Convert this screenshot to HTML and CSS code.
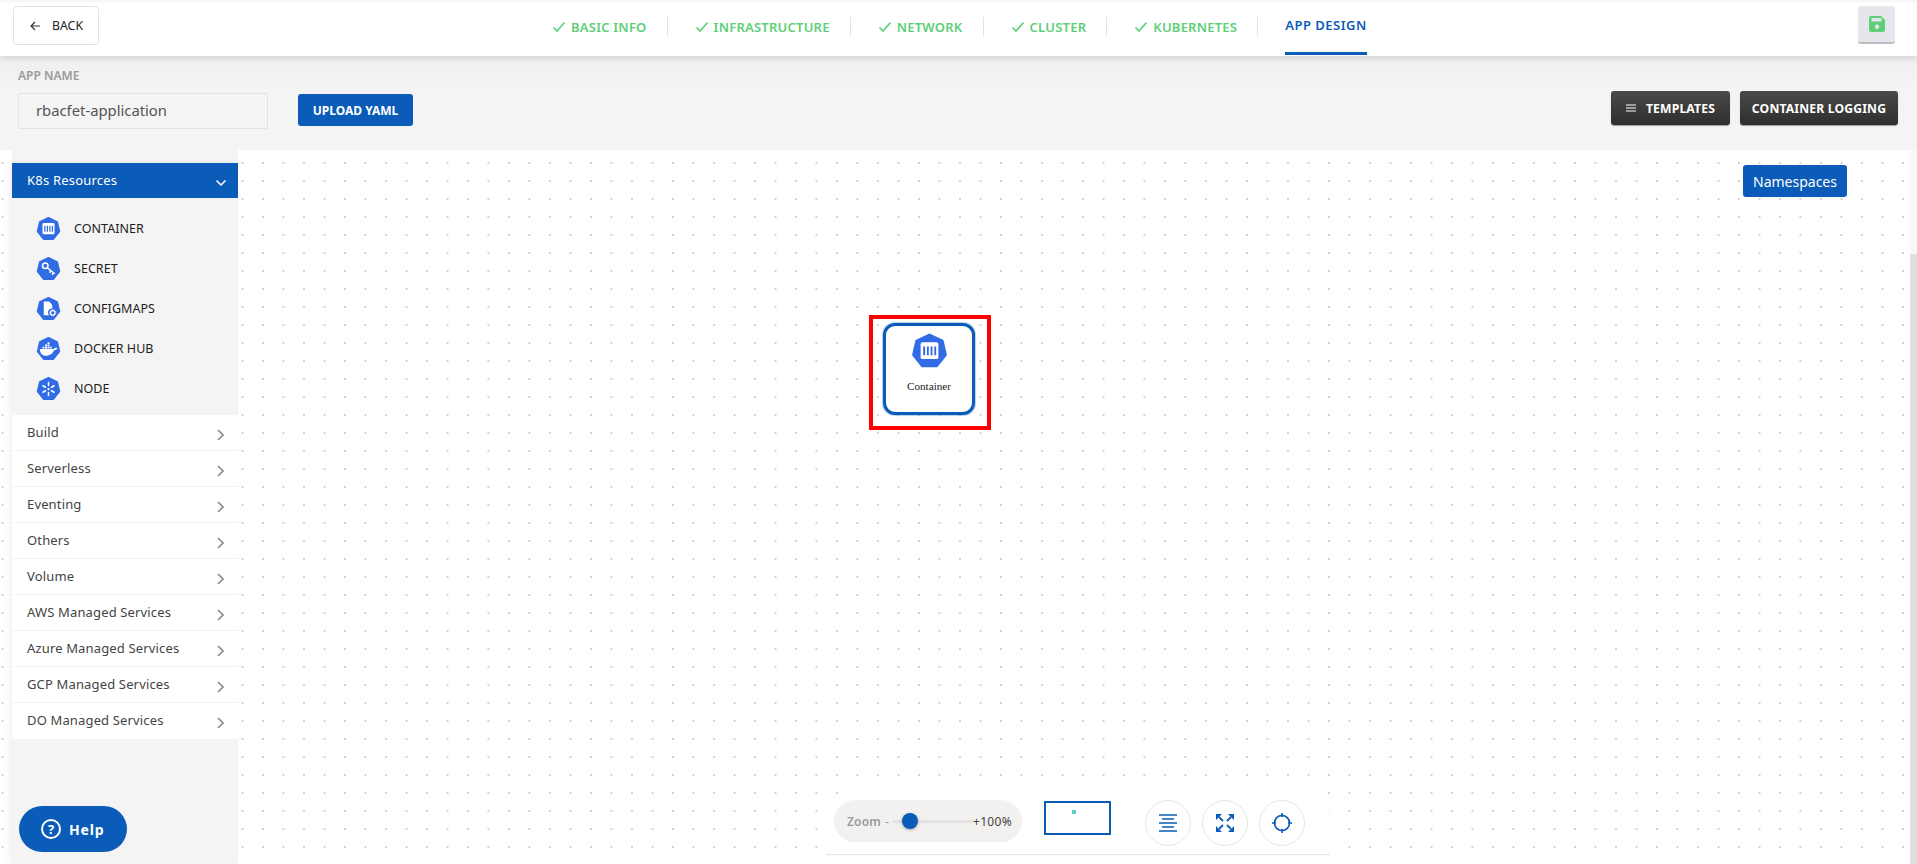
FILE: index.html
```html
<!DOCTYPE html>
<html lang="en">
<head>
<meta charset="utf-8">
<title>App Design</title>
<link rel="stylesheet" href="styles.css">
</head>
<body>
<svg class="defs" width="0" height="0" aria-hidden="true">
  <symbol id="hept" viewBox="0 0 100 100"><path class="hept-shape" d="M50 8 84.4 24.6 92.9 61.8 69.1 91.6 30.9 91.6 7.1 61.8 15.6 24.6Z"/></symbol>
  <symbol id="i-container" viewBox="0 0 100 100">
    <use href="#hept"/>
    <path fill="#fff" d="M31 28h38a5 5 0 0 1 5 5v35a5 5 0 0 1-5 5H31a5 5 0 0 1-5-5V33a5 5 0 0 1 5-5Z"/>
    <path fill="#326ce5" d="M33 39h5v24h-5zM43 39h5v24h-5zM53 39h5v24h-5zM63 39h5v24h-5z"/>
  </symbol>
  <symbol id="i-secret" viewBox="0 0 100 100">
    <use href="#hept"/>
    <circle cx="37" cy="39" r="11" fill="none" stroke="#fff" stroke-width="6"/>
    <path fill="none" stroke="#fff" stroke-width="6" d="M45 47 75 71M60 59l-6 8M70 67l-6 8"/>
  </symbol>
  <symbol id="i-config" viewBox="0 0 100 100">
    <use href="#hept"/>
    <path fill="#fff" d="M31 22h22l12 14v14a16 16 0 0 0-13 27H31Z"/>
    <circle cx="67" cy="67" r="9" fill="none" stroke="#fff" stroke-width="5"/>
    <circle cx="67" cy="67" r="13" fill="none" stroke="#fff" stroke-width="3" stroke-dasharray="4 4"/>
  </symbol>
  <symbol id="i-docker" viewBox="0 0 100 100">
    <use href="#hept"/>
    <path fill="#fff" d="M15 52h56c3-5 9-6 15-4-3 6-8 9-14 9-5 13-17 22-32 22-15 0-24-10-25-27Z"/>
    <path fill="#fff" d="M26 43h8v7h-8zM36 43h8v7h-8zM46 43h8v7h-8zM56 43h7v7h-7zM36 34h8v7h-8zM46 34h8v7h-8zM46 25h8v7h-8z"/>
  </symbol>
  <symbol id="i-node" viewBox="0 0 100 100">
    <use href="#hept"/>
    <circle cx="50" cy="52" r="4.500" fill="#fff"/>
    <path fill="none" stroke="#fff" stroke-width="6" stroke-linecap="round" d="M50 26v12M50 66v12M28 39l10 6M62 59l10 6M28 65l10-6M62 45l10-6"/>
  </symbol>
  <symbol id="i-chev" viewBox="0 0 7 12"><path d="M1 1l5 5-5 5" fill="none" stroke="#8a8a8a" stroke-width="1.600"/></symbol>
  <symbol id="i-check" viewBox="0 0 14 12"><path d="M1.500 6.500 5 10l7.500-8.500" fill="none" stroke="#5ccf77" stroke-width="1.600"/></symbol>
</svg>

<header class="topbar">
  <button class="back">
    <svg class="back-arrow" viewBox="0 0 12 12"><path d="M11 6H2M6 2 2 6l4 4" fill="none" stroke="#333" stroke-width="1.200"/></svg>
    BACK
  </button>
  <nav class="steps">
    <div class="step"><svg class="check"><use href="#i-check"/></svg>BASIC INFO</div>
    <div class="step"><svg class="check"><use href="#i-check"/></svg>INFRASTRUCTURE</div>
    <div class="step"><svg class="check"><use href="#i-check"/></svg>NETWORK</div>
    <div class="step"><svg class="check"><use href="#i-check"/></svg>CLUSTER</div>
    <div class="step"><svg class="check"><use href="#i-check"/></svg>KUBERNETES</div>
    <div class="step-active">APP DESIGN</div>
  </nav>
  <button class="save" aria-label="Save">
    <svg viewBox="0 0 16 16" width="16" height="16"><path fill="#5ccf77" d="M2 0h10l4 4v10a2 2 0 0 1-2 2H2a2 2 0 0 1-2-2V2a2 2 0 0 1 2-2Z"/><rect x="2.500" y="2" width="10" height="3.500" rx=".5" fill="#e6e6ec"/><circle cx="8" cy="10.800" r="2.200" fill="#e6e6ec"/></svg>
  </button>
</header>

<section class="appbar">
  <div class="appname">
    <label class="appname-label">APP NAME</label>
    <div class="appname-input">rbacfet-application</div>
  </div>
  <button class="upload">UPLOAD YAML</button>
  <button class="dark dark-first">
    <svg class="ham" viewBox="0 0 10 8"><path d="M0 1h10M0 4h10M0 7h10" stroke="#fff" stroke-width="1"/></svg>
    TEMPLATES
  </button>
  <button class="dark">CONTAINER LOGGING</button>
</section>

<main class="main">
  <div class="gutter"></div>
  <aside class="sidebar">
    <div class="side-head">K8s Resources
      <svg class="side-chev" viewBox="0 0 12 8"><path d="M1.500 1.500 6 6l4.500-4.500" fill="none" stroke="#fff" stroke-width="1.500"/></svg>
    </div>
    <ul class="res-list">
      <li class="res"><svg class="res-icon"><use href="#i-container"/></svg>CONTAINER</li>
      <li class="res"><svg class="res-icon"><use href="#i-secret"/></svg>SECRET</li>
      <li class="res"><svg class="res-icon"><use href="#i-config"/></svg>CONFIGMAPS</li>
      <li class="res"><svg class="res-icon"><use href="#i-docker"/></svg>DOCKER HUB</li>
      <li class="res"><svg class="res-icon"><use href="#i-node"/></svg>NODE</li>
    </ul>
    <ul class="groups">
      <li class="group">Build<svg class="chev"><use href="#i-chev"/></svg></li>
      <li class="group">Serverless<svg class="chev"><use href="#i-chev"/></svg></li>
      <li class="group">Eventing<svg class="chev"><use href="#i-chev"/></svg></li>
      <li class="group">Others<svg class="chev"><use href="#i-chev"/></svg></li>
      <li class="group">Volume<svg class="chev"><use href="#i-chev"/></svg></li>
      <li class="group">AWS Managed Services<svg class="chev"><use href="#i-chev"/></svg></li>
      <li class="group">Azure Managed Services<svg class="chev"><use href="#i-chev"/></svg></li>
      <li class="group">GCP Managed Services<svg class="chev"><use href="#i-chev"/></svg></li>
      <li class="group">DO Managed Services<svg class="chev"><use href="#i-chev"/></svg></li>
    </ul>
  </aside>

  <div class="canvas">
    <button class="namespaces">Namespaces</button>

    <div class="highlight">
      <div class="node">
        <svg class="node-icon"><use href="#i-container"/></svg>
        <span class="node-label">Container</span>
      </div>
    </div>

    <div class="toolbar">
      <div class="zoom">
        <span class="zoom-label">Zoom</span>
        <span class="zoom-minus">-</span>
        <span class="track"><span class="thumb"></span></span>
        <span class="zoom-val">+100%</span>
      </div>
      <div class="minimap-wrap">
        <div class="minimap"><span class="minimap-dot"></span></div>
      </div>
      <div class="tools">
        <button class="tool" aria-label="Align">
          <svg viewBox="0 0 18 18" width="18" height="18"><path d="M0 1h18M3 5h12M0 9h18M3 13h12M0 17h18" stroke="#0b5cb8" stroke-width="1.500"/></svg>
        </button>
        <button class="tool" aria-label="Fit">
          <svg viewBox="0 0 18 18" width="18" height="18"><path fill="#0b5cb8" d="M0 0h6L0 6ZM18 0h-6l6 6ZM0 18h6l-6-6ZM18 18h-6l6-6Z"/><path d="M3 3l4 4M15 3l-4 4M3 15l4-4M15 15l-4-4" stroke="#0b5cb8" stroke-width="1.800"/></svg>
        </button>
        <button class="tool" aria-label="Center">
          <svg viewBox="0 0 20 20" width="20" height="20"><circle cx="10" cy="10" r="7.500" fill="none" stroke="#0b5cb8" stroke-width="1.700"/><path d="M10 0v4M10 16v4M0 10h4M16 10h4" stroke="#0b5cb8" stroke-width="1.700"/></svg>
        </button>
      </div>
    </div>
  </div>
  <div class="scrollbar"><div class="scroll-thumb"></div></div>

  <button class="help">
    <span class="help-q">?</span>Help
  </button>
</main>
</body>
</html>
```
FILE: styles.css
```css
* { box-sizing: border-box; }
html, body { margin: 0; height: 100%; }
body {
  font-family: "Noto Sans", "Open Sans", sans-serif;
  background: #f4f4f4;
  color: #222;
  overflow: hidden;
  width: 1917px;
  height: 864px;
}
button { font-family: inherit; cursor: pointer; }
ul { list-style: none; margin: 0; padding: 0; }
.defs { position: absolute; }
.hept-shape { fill: #326ce5; stroke: #326ce5; stroke-width: 8; stroke-linejoin: round; }

/* top bar */
.topbar {
  height: 56px;
  background: #fff;
  display: flex;
  align-items: flex-start;
  box-shadow: 0 2px 6px rgba(0,0,0,.12), inset 0 2px 2px rgba(0,0,0,.04);
  position: relative;
  z-index: 2;
  padding-left: 13px;
}
.back {
  margin-top: 6px;
  width: 86px;
  height: 39px;
  background: #fff;
  border: 1px solid #e2e2e2;
  border-radius: 4px;
  font-size: 12.300px;
  color: #222;
  display: flex;
  align-items: center;
  gap: 11px;
  padding: 0 0 0 15px;
}
.back-arrow { width: 12px; height: 12px; }
.steps {
  display: flex;
  align-items: flex-start;
  margin-left: 453px;
  font-size: 13px;
  font-weight: 600;
  letter-spacing: .23px;
  color: #5ccf77;
}
.step {
  display: flex;
  align-items: center;
  height: 19px;
  margin-top: 17px;
  padding: 0 20px 0 0;
  margin-right: 27px;
  border-right: 1px solid #e3e3e3;
  white-space: nowrap;
}
.check { width: 14px; height: 12px; margin-right: 5px; }
.step-active {
  height: 55px;
  padding-top: 16px;
  line-height: 19px;
  color: #0b5cb8;
  border-bottom: 3px solid #0b5cb8;
  white-space: nowrap;
  letter-spacing: .5px;
}
.save {
  margin: 6px 0 0 auto;
  margin-right: 22px;
  width: 37px;
  height: 38px;
  background: #e6e6ec;
  border: 0;
  border-bottom: 2px solid #bdbdc2;
  border-radius: 3px;
  display: flex;
  align-items: center;
  justify-content: center;
  padding: 0;
}

/* app bar */
.appbar {
  height: 94px;
  display: flex;
  align-items: flex-start;
  padding: 0 19px 0 18px;
  background: linear-gradient(#eeeeee, #f4f4f4 30px);
}
.appname { padding-top: 12px; width: 250px; }
.appname-label {
  display: block;
  font-size: 12px;
  line-height: 16px;
  font-weight: 600;
  color: #9a9a9a;
  margin-bottom: 9px;
}
.appname-input {
  height: 36px;
  border: 1px solid #e2e2e2;
  border-radius: 2px;
  background: #f4f4f4;
  font-size: 14.800px;
  line-height: 33px;
  padding-left: 17px;
  color: #555;
}
.upload {
  margin: 38px 0 0 30px;
  width: 115px;
  height: 32px;
  background: #0b5cb8;
  color: #fff;
  border: 0;
  border-radius: 3px;
  font-size: 12px;
  font-weight: 700;
  padding: 0;
}
.dark {
  margin: 35px 0 0 10px;
  height: 34px;
  width: 158px;
  background: linear-gradient(#4a4a4a, #2e2e2e);
  color: #fff;
  border: 0;
  border-radius: 3px;
  box-shadow: 0 1px 1px #999;
  font-size: 12.200px;
  font-weight: 700;
  letter-spacing: .15px;
  padding: 0;
  display: flex;
  align-items: center;
  justify-content: center;
}
.dark-first { margin-left: auto; width: 119px; }
.ham { width: 10px; height: 8px; margin-right: 10px; }

/* main */
.main {
  height: 714px;
  display: flex;
  position: relative;
}
.gutter {
  width: 12px;
  background-color: #fff;
  background-image: radial-gradient(circle at 1px 1px, #d2d2d2 1px, transparent 1.300px);
  background-size: 20.500px 18px;
  background-position: 1.500px 12px;
}
.sidebar {
  width: 226px;
  margin-top: 13px;
  background: #f4f4f4;
  box-shadow: -3px 0 5px rgba(0,0,0,.05);
  position: relative;
  z-index: 1;
}
.side-head {
  height: 35px;
  background: #0b5cb8;
  color: #fff;
  font-size: 13px;
  letter-spacing: .2px;
  padding-left: 15px;
  display: flex;
  align-items: center;
  justify-content: space-between;
  padding-right: 11px;
  padding-bottom: 1px;
}
.side-chev { width: 12px; height: 8px; margin-top: 5px; }
.res-list { padding: 10px 0 7px 24px; }
.res {
  height: 40px;
  display: flex;
  align-items: center;
  gap: 13px;
  font-size: 12.500px;
  letter-spacing: .05px;
  color: #1d1d1d;
}
.res-icon { width: 25px; height: 25px; }
.group {
  height: 36px;
  background: #fff;
  border-bottom: 1px solid #f1f1f1;
  display: flex;
  align-items: center;
  justify-content: space-between;
  padding: 0 14px 2px 15px;
  font-size: 13px;
  letter-spacing: .15px;
  color: #444;
}
.group:last-child { border-bottom: 0; }
.chev { width: 7px; height: 12px; margin-top: 6px; }

/* canvas */
.canvas {
  flex: 1;
  position: relative;
  background-color: #fff;
  background-image: radial-gradient(circle at 1px 1px, #d2d2d2 1px, transparent 1.300px);
  background-size: 20.500px 18px;
  background-position: 3.500px 12px;
}
.namespaces {
  position: absolute;
  left: 1505px;
  top: 15px;
  width: 104px;
  height: 32px;
  background: #0b5cb8;
  color: #fff;
  border: 0;
  border-radius: 3px;
  font-size: 14px;
  padding: 0;
}
.highlight {
  position: absolute;
  left: 631px;
  top: 165px;
  width: 122px;
  height: 115px;
  border: 4px solid #f00;
  display: flex;
  justify-content: center;
  align-items: flex-start;
  padding: 4px 2px 0 0;
}
.node {
  width: 92px;
  height: 92px;
  background: #fff;
  border: 3px solid #0b5cb8;
  border-radius: 12px;
  display: flex;
  flex-direction: column;
  align-items: center;
  padding-top: 6px;
  box-shadow: 0 0 1px 1px rgba(11,92,184,.3);
}
.node-icon { width: 37px; height: 37px; }
.node-label {
  font-family: "Liberation Serif", serif;
  font-size: 11.200px;
  line-height: 14px;
  margin-top: 10px;
  color: #222;
}

/* toolbar */
.toolbar {
  position: absolute;
  left: 588px;
  bottom: 10px;
  width: 504px;
  height: 62px;
  background: #fff;
  border-radius: 22px 22px 0 0;
  box-shadow: 0 1px 1px rgba(0,0,0,.12);
  display: flex;
  align-items: flex-start;
  padding: 8px 0 0 8px;
}
.zoom {
  width: 188px;
  height: 42px;
  border-radius: 21px;
  background: #f2f1f0;
  display: flex;
  align-items: center;
  padding-left: 13px;
}
.zoom-label { font-size: 12px; font-weight: 600; color: #9a9a9a; width: 38px; letter-spacing: .2px; }
.zoom-minus { font-size: 12px; color: #999; width: 8px; }
.track {
  width: 80px;
  height: 3px;
  background: #e2e2e2;
  position: relative;
}
.thumb {
  position: absolute;
  left: 9px;
  top: -7px;
  width: 16px;
  height: 16px;
  border-radius: 50%;
  background: #0b5cb8;
  box-shadow: 0 1px 3px rgba(0,0,0,.3);
}
.zoom-val { font-size: 12px; color: #444; letter-spacing: .3px; }
.minimap-wrap {
  margin-left: 22px;
  margin-top: -2px;
  width: 67px;
  height: 41px;
  position: relative;
  padding-top: 3px;
}
.minimap {
  width: 67px;
  height: 34px;
  border: 2px solid #0b5cb8;
  position: relative;
}
.minimap-dot {
  position: absolute;
  left: 26px;
  top: 7px;
  width: 4px;
  height: 4px;
  background: #5dcfc0;
}
.tools { display: flex; gap: 11px; margin-left: 34px; margin-top: 0; }
.tool {
  width: 46px;
  height: 46px;
  border-radius: 50%;
  border: 1px solid #e6e6e6;
  background: #fff;
  display: flex;
  align-items: center;
  justify-content: center;
  padding: 0;
}

/* scrollbar */
.scrollbar { width: 7px; background: #f8f8f8; padding-top: 104px; }
.scroll-thumb { height: 100%; background: #dfdfdf; }

/* help */
.help {
  position: absolute;
  left: 19px;
  bottom: 12px;
  width: 108px;
  height: 46px;
  border-radius: 23px;
  background: #0b5cb8;
  color: #fff;
  border: 0;
  font-size: 14px;
  font-weight: 700;
  letter-spacing: .8px;
  display: flex;
  align-items: center;
  padding: 0 0 0 22px;
  gap: 8px;
  z-index: 3;
}
.help-q {
  width: 20px;
  height: 20px;
  border: 2px solid #fff;
  border-radius: 50%;
  font-size: 13px;
  line-height: 16px;
  text-align: center;
  letter-spacing: 0;
}
```
